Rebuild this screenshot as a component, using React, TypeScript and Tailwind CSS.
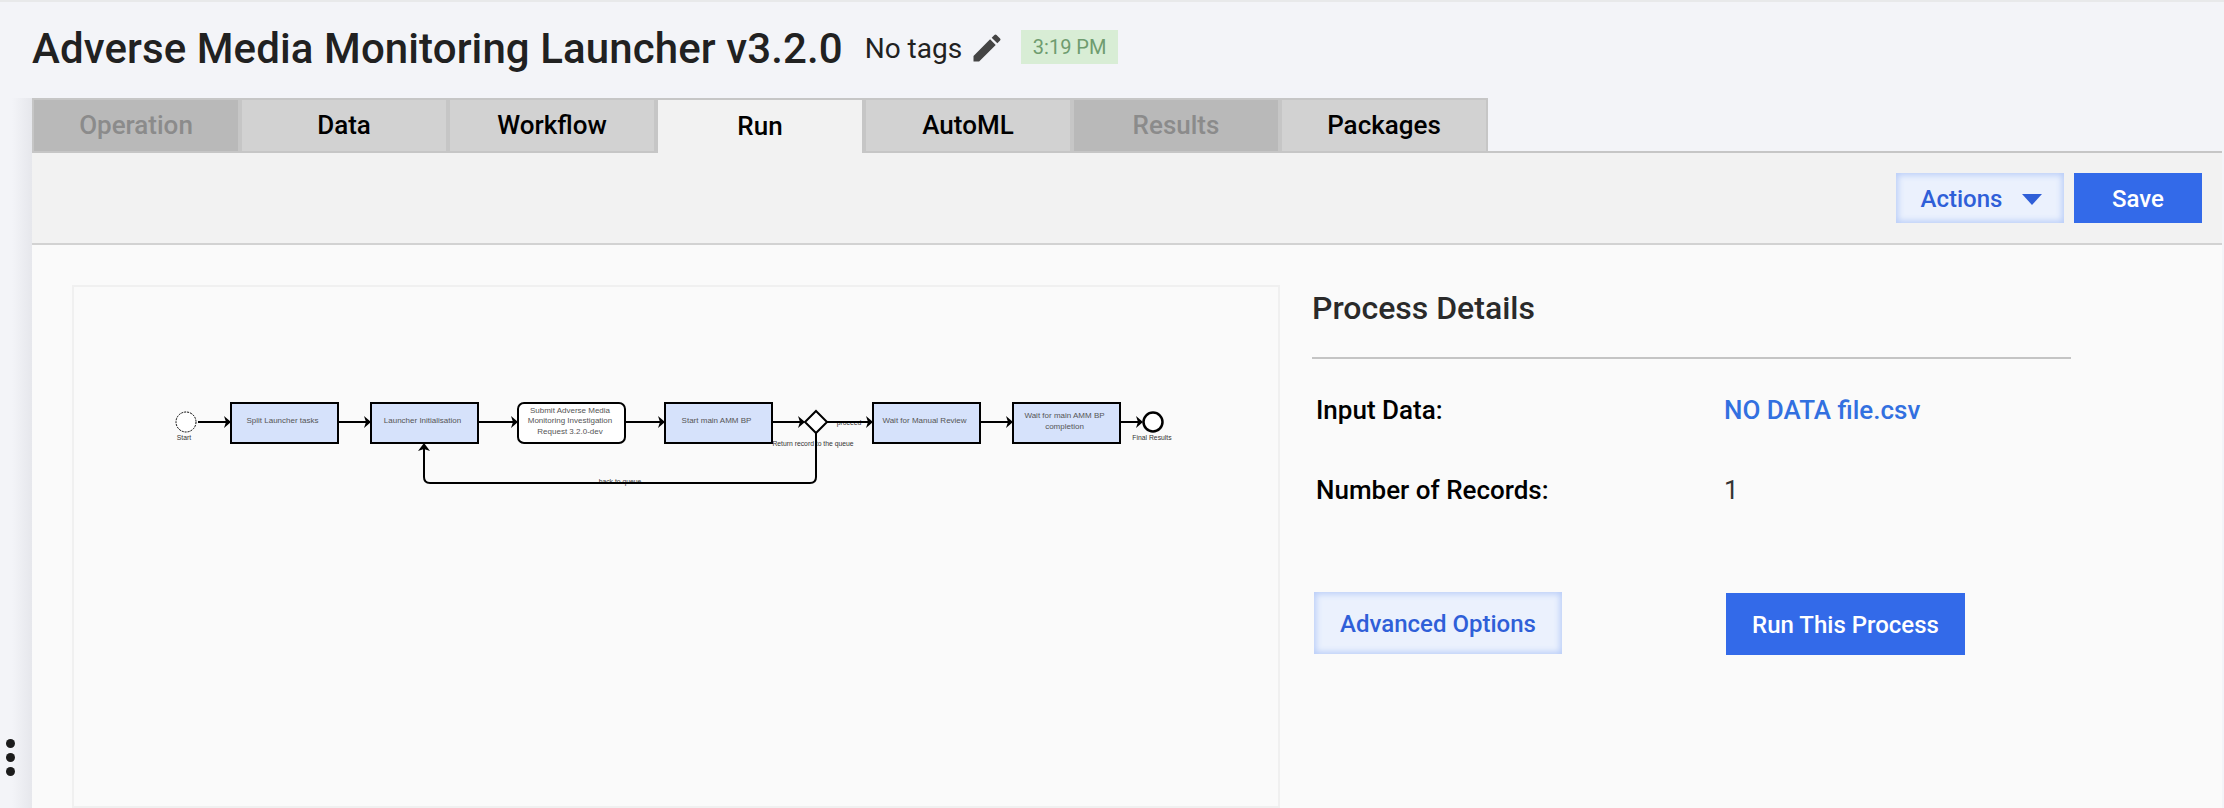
import { MdEdit } from "react-icons/md";

const tabs = [
  { label: "Operation", state: "off" },
  { label: "Data", state: "on" },
  { label: "Workflow", state: "on" },
  { label: "Run", state: "active" },
  { label: "AutoML", state: "on" },
  { label: "Results", state: "off" },
  { label: "Packages", state: "on" },
];

function tabClass(state: string) {
  if (state === "active") return "bg-[#f2f2f2] text-black border-x-2 border-x-[#c6c6c6] border-t-2 border-t-[#c6c6c6]";
  if (state === "off") return "bg-[#b9b9b9] text-[#8b8b8b] border-2 border-[#c6c6c6]";
  return "bg-[#d2d2d2] text-black border-2 border-[#c6c6c6]";
}

function Box({ x, label, label2 }: { x: number; label: string; label2?: string }) {
  return (
    <g>
      <rect x={x} y={402} width={107} height={40} fill="#d6e2fb" stroke="#000" strokeWidth="2" />
      {label2 ? (
        <>
          <text x={x + 51.5} y={417} textAnchor="middle" fontSize="8" fill="#555">{label}</text>
          <text x={x + 51.5} y={428} textAnchor="middle" fontSize="8" fill="#555">{label2}</text>
        </>
      ) : (
        <text x={x + 51.5} y={422} textAnchor="middle" fontSize="8" fill="#555">{label}</text>
      )}
    </g>
  );
}

function Arrow({ x1, x2 }: { x1: number; x2: number }) {
  return (
    <g>
      <line x1={x1} y1={421} x2={x2 - 3} y2={421} stroke="#000" strokeWidth="2" />
      <path d={`M${x2 - 7} 415 L${x2} 421 L${x2 - 7} 427 L${x2 - 5} 421 Z`} fill="#000" />
    </g>
  );
}

// the picture is offset so that its numbers are page coordinates
function Diagram() {
  return (
    <svg viewBox="73 286 1206 522" width="1206" height="522" className="block" fontFamily="'Liberation Sans', Arial, sans-serif">
      <circle cx="185" cy="421" r="10" fill="#fff" stroke="#000" strokeWidth="1" strokeDasharray="2 1" />
      <text x="183" y="439" textAnchor="middle" fontSize="6.8" fill="#333">Start</text>
      <Arrow x1={197} x2={230} />
      <Box x={230} label="Split Launcher tasks" />
      <Arrow x1={337} x2={370} />
      <Box x={370} label="Launcher Initialisation" />
      <Arrow x1={478} x2={517} />
      <rect x="517" y="402" width="107" height="40" rx="6" fill="#fff" stroke="#000" strokeWidth="2" />
      <text x="569" y="412" textAnchor="middle" fontSize="8" fill="#555">Submit Adverse Media</text>
      <text x="569" y="422" textAnchor="middle" fontSize="8" fill="#555">Monitoring Investigation</text>
      <text x="569" y="433" textAnchor="middle" fontSize="8" fill="#555">Request 3.2.0-dev</text>
      <Arrow x1={625} x2={664} />
      <Box x={664} label="Start main AMM BP" />
      <Arrow x1={772} x2={804} />
      <text x="812" y="445" textAnchor="middle" fontSize="6.8" fill="#333">Return record to the queue</text>
      <text x="848" y="424" textAnchor="middle" fontSize="6.8" fill="#333">proceed</text>
      <text x="619" y="483" textAnchor="middle" fontSize="6.8" fill="#333">back to queue</text>
      <path d="M815 432 L815 476 Q815 482 809 482 L429 482 Q423 482 423 476 L423 446" fill="none" stroke="#000" strokeWidth="2" />
      <path d="M417 450 L423 442 L429 450 L423 448 Z" fill="#000" />
      <path d="M815 410 L826 421 L815 432 L804 421 Z" fill="#fff" stroke="#000" strokeWidth="2" />
      <Arrow x1={826} x2={872} />
      <Box x={872} label="Wait for Manual Review" />
      <Arrow x1={979} x2={1012} />
      <Box x={1012} label="Wait for main AMM BP" label2="completion" />
      <Arrow x1={1120} x2={1142} />
      <circle cx="1152" cy="421" r="9.5" fill="#fff" stroke="#000" strokeWidth="2.5" />
      <text x="1151" y="439" textAnchor="middle" fontSize="6.8" fill="#333">Final Results</text>
    </svg>
  );
}

export default function App() {
  return (
    <div className="relative h-[808px] overflow-hidden bg-[#f3f4f8] font-['Roboto',sans-serif]">
      <div className="h-[2px] bg-[#e8e9ea]" />
      <div className="flex h-[96px] items-start pl-8 pt-[17px]">
        <h1 className="text-[42px] leading-[60px] font-medium tracking-[0.1px] text-[#212121]">
          Adverse Media Monitoring Launcher v3.2.0
        </h1>
        <span className="ml-[22px] text-[28px] leading-[60px] text-[#212121]">No tags</span>
        <MdEdit size={36} className="ml-[7px] mt-[11px] text-[#444444]" />
        <span className="ml-[16px] mt-[11px] flex h-[34px] w-[97px] items-center justify-center bg-[#d8edd5] text-xl text-[#6f9c6f]">
          3:19 PM
        </span>
      </div>

      <div className="pl-8 pr-[2px]">
        <div className="relative z-10 flex h-[55px]">
          {tabs.map((t) => (
            <div
              key={t.label}
              className={`w-[208px] ${tabClass(t.state)} flex items-center justify-center text-[26px] font-medium`}
            >
              {t.label}
            </div>
          ))}
        </div>
        <div className="-mt-[2px] flex h-[94px] justify-end gap-[10px] border-y-2 border-t-[#c6c6c6] border-b-[#d2d2d2] bg-[#f2f2f2] pt-[20px] pr-5">
          <button className="flex h-[50px] w-[168px] items-center justify-center gap-[20px] bg-[#ebf1fd] pt-[2px] pl-[3px] text-[24px] font-medium text-[#2f5fd8] shadow-[inset_0_0_6px_2px_#b9cdf8]">
            Actions
            <span className="h-0 w-0 border-x-[10px] border-t-[11px] border-x-transparent border-t-[#2f5fd8]" />
          </button>
          <button className="h-[50px] w-[128px] bg-[#336ae9] pt-[2px] text-[24px] font-medium text-white">Save</button>
        </div>
        <div className="flex h-[563px] bg-[#fafafa] pl-10 pt-10">
          <div className="h-full w-[1208px] shrink-0 border-2 border-[#f0f0f0]">
            <Diagram />
          </div>
          <div className="ml-8 w-[760px]">
            <h2 className="h-[74px] w-[759px] border-b-2 border-[#c4c4c4] text-[32px] leading-[46px] font-medium text-[#2a2a2a]">
              Process Details
            </h2>
            <div className="mt-[31px] grid grid-cols-[408px_1fr] gap-y-[40px] pl-1 text-[26px] leading-10">
              <div className="font-medium text-black">Input Data:</div>
              <div className="font-medium text-[#3270e0]">NO DATA file.csv</div>
              <div className="font-medium text-black">Number of Records:</div>
              <div className="text-[#333333]">1</div>
            </div>
            <div className="mt-[82px] flex items-start pl-[2px]">
              <button className="h-[62px] w-[248px] bg-[#ebf1fd] pt-[2px] text-[24px] font-medium text-[#2f5fd8] shadow-[inset_0_0_6px_2px_#b9cdf8]">
                Advanced Options
              </button>
              <button className="ml-[164px] mt-[1px] h-[62px] w-[239px] bg-[#336ae9] pt-[2px] text-[24px] font-medium text-white">
                Run This Process
              </button>
            </div>
          </div>
        </div>
      </div>

      {/* sidebar shadow + drag handle */}
      <div className="absolute left-[12px] top-[98px] bottom-0 w-5 bg-gradient-to-r from-transparent to-[#e6e7ec]" />
      <div className="absolute left-[6px] top-[739px] flex flex-col gap-[5px]">
        <span className="h-[9px] w-[9px] rounded-full bg-[#1c1c1c]" />
        <span className="h-[9px] w-[9px] rounded-full bg-[#1c1c1c]" />
        <span className="h-[9px] w-[9px] rounded-full bg-[#1c1c1c]" />
      </div>
    </div>
  );
}
